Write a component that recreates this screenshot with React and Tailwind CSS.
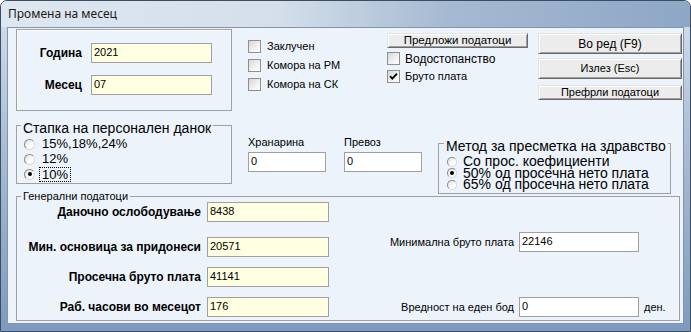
import React from "react";

// mali kontroli vo stil na Windows 7 dijalog
const CheckBox = ({ checked }) => (
    <span className="w-[13px] h-[13px] shrink-0 border border-[#8e8f8f] bg-[linear-gradient(135deg,#d6d6d6_0%,#f2f2f2_60%,#ffffff_100%)] flex items-center justify-center">
        {checked && (
            <svg width="11" height="11" viewBox="0 0 11 11">
                <path d="M2 5.2 L4.3 7.6 L9 2.6" stroke="#000" strokeWidth="1.9" fill="none" />
            </svg>
        )}
    </span>
);

const Radio = ({ checked, size = "w-[11px] h-[11px]" }) => (
    <span className={`${size} shrink-0 rounded-full border border-[#8a8a8a] border-r-[#d8d8d8] border-b-[#d8d8d8] bg-[linear-gradient(135deg,#e2e2e2_0%,#ffffff_70%)] flex items-center justify-center`}>
        {checked && <span className="w-[4px] h-[4px] rounded-full bg-black" />}
    </span>
);

const Field = ({ value, className, yellow = true }) => (
    <input
        readOnly
        defaultValue={value}
        className={`${className} block shrink-0 h-[20px] border border-[#a0a0a0] ${yellow ? "bg-[#ffffe1]" : "bg-white"} px-[2px] pt-[1px] pb-[4px] text-[11px] leading-[12px] text-black outline-none`}
    />
);

const WinButton = ({ children, className }) => (
    <button
        type="button"
        className={`${className} border border-t-[#e3e3e3] border-l-[#e3e3e3] border-r-[#696969] border-b-[#696969] bg-[#ececec] shadow-[inset_1px_1px_0_#fff,inset_-1px_-1px_0_#a0a0a0] leading-none text-black flex items-center justify-center`}
    >
        {children}
    </button>
);

export default function App() {
    return (
        <div className="w-[691px] h-[332px] flex flex-col overflow-hidden rounded-t-[7px] border border-[#3d4d61] bg-[linear-gradient(180deg,#d4dfeb_0%,#a8bcd4_45%,#7d9abf_100%)] font-['Liberation_Sans',Arial,sans-serif] text-black">
            {/* naslovna lenta */}
            <div className="h-[26px] shrink-0 flex items-center pl-[7px] bg-[linear-gradient(90deg,#dee7f0_0%,#d4dfea_40%,#a5b9d2_65%,#8ea7c6_100%)] font-['Noto_Sans',sans-serif] text-[12px] text-[#1b1b1b]">
                Промена на месец
            </div>

            <div className="flex-1 flex px-[6px] pb-[7px]">
                <div className="flex-1 flex flex-col border border-[#8495ab] bg-[#edf3fb] pl-[8px]">
                    {/* goren red */}
                    <div className="flex mt-[1px]">
                        <div className="w-[216px] h-[82px] flex flex-col pt-[13px] border border-[#a0a0a0] shadow-[inset_1px_1px_0_#fff]">
                            <div className="flex items-center">
                                <span className="w-[65px] text-right text-[12px] font-bold">Година</span>
                                <Field value="2021" className="ml-[9px] w-[121px]" />
                            </div>
                            <div className="flex items-center mt-[12px]">
                                <span className="w-[65px] text-right text-[12px] font-bold">Месец</span>
                                <Field value="07" className="ml-[9px] w-[121px]" />
                            </div>
                        </div>

                        <div className="ml-[16px] w-[139px] pt-[11px] flex flex-col gap-[6px] text-[11px]">
                            <label className="h-[13px] flex items-center gap-[6px]"><CheckBox />Заклучен</label>
                            <label className="h-[13px] flex items-center gap-[6px]"><CheckBox />Комора на РМ</label>
                            <label className="h-[13px] flex items-center gap-[6px]"><CheckBox />Комора на СК</label>
                        </div>

                        <div className="w-[151px] pt-[4px] flex flex-col">
                            <WinButton className="w-[141px] h-[15px] text-[11.5px]">Предложи податоци</WinButton>
                            <label className="mt-[4px] h-[13px] flex items-center gap-[5px] text-[12px]"><CheckBox />Водостопанство</label>
                            <label className="mt-[5px] h-[13px] flex items-center gap-[5px] text-[11px]"><CheckBox checked />Бруто плата</label>
                        </div>

                        <div className="w-[144px] pt-[4px] flex flex-col">
                            <WinButton className="w-[144px] h-[21px] text-[12px]">Во ред (F9)</WinButton>
                            <WinButton className="w-[144px] h-[21px] mt-[4px] text-[11px]">Излез (Esc)</WinButton>
                            <WinButton className="w-[144px] h-[15px] mt-[6px] text-[11px]">Префрли податоци</WinButton>
                        </div>
                    </div>

                    {/* sreden red */}
                    <div className="flex items-start mt-[7px]">
                        <fieldset className="w-[216px] border border-[#a0a0a0] pb-[2px]">
                            <legend className="ml-[4px] px-[2px] text-[14px] leading-[14px] whitespace-nowrap">
                                <span className="inline-block translate-y-[3px]">Стапка на персонален данок</span>
                            </legend>
                            <div className="flex flex-col pt-[5px] pl-[7px] gap-[1px] text-[13px]">
                                <div className="h-[14px] flex items-center gap-[7px]"><Radio />15%,18%,24%</div>
                                <div className="h-[14px] flex items-center gap-[7px]"><Radio />12%</div>
                                <div className="h-[14px] flex items-center gap-[4px]">
                                    <Radio checked />
                                    <span className="border border-dotted border-black px-[2px] leading-[13px]">10%</span>
                                </div>
                            </div>
                        </fieldset>

                        <div className="ml-[16px] w-[78px] pt-[18px] flex flex-col">
                            <span className="text-[11px] leading-[13px]">Хранарина</span>
                            <Field value="0" className="mt-[3px] w-[78px]" yellow={false} />
                        </div>
                        <div className="ml-[18px] w-[78px] pt-[18px] flex flex-col">
                            <span className="text-[11px] leading-[13px]">Превоз</span>
                            <Field value="0" className="mt-[3px] w-[78px]" yellow={false} />
                        </div>

                        <fieldset className="ml-[16px] mt-[18px] w-[233px] border border-[#a0a0a0] pb-[2px]">
                            <legend className="ml-[5px] px-[2px] text-[14px] leading-[14px] whitespace-nowrap">
                                <span className="inline-block translate-y-[3px]">Метод за пресметка на здравство</span>
                            </legend>
                            <div className="flex flex-col pt-[6px] pl-[8px] text-[14px] leading-[11.5px] whitespace-nowrap">
                                <div className="h-[11.5px] flex items-center gap-[6px]"><Radio size="w-[10px] h-[10px]" />Со прос. коефициенти</div>
                                <div className="h-[11.5px] flex items-center gap-[6px]"><Radio size="w-[10px] h-[10px]" checked />50% од просечна нето плата</div>
                                <div className="h-[11.5px] flex items-center gap-[6px]"><Radio size="w-[10px] h-[10px]" />65% од просечна нето плата</div>
                            </div>
                        </fieldset>
                    </div>

                    {/* generalni podatoci */}
                    <fieldset className="mt-[-3.5px] w-[664px] border border-[#a0a0a0] pb-[3px]">
                        <legend className="ml-[4px] px-[2px] text-[11px] leading-[12px]">Генерални податоци</legend>
                        <div className="flex">
                            <div className="flex flex-col">
                                <div className="flex items-center">
                                    <span className="w-[184px] text-right text-[12px] font-bold">Даночно ослободување</span>
                                    <Field value="8438" className="ml-[6px] w-[122px]" />
                                </div>
                                <div className="flex items-center mt-[15px]">
                                    <span className="w-[184px] text-right text-[12px] font-bold">Мин. основица за придонеси</span>
                                    <Field value="20571" className="ml-[6px] w-[122px]" />
                                </div>
                                <div className="flex items-center mt-[10px]">
                                    <span className="w-[184px] text-right text-[12px] font-bold">Просечна бруто плата</span>
                                    <Field value="41141" className="ml-[6px] w-[122px]" />
                                </div>
                                <div className="flex items-center mt-[10px]">
                                    <span className="w-[184px] text-right text-[12px] font-bold">Раб. часови во месецот</span>
                                    <Field value="176" className="ml-[6px] w-[122px]" />
                                </div>
                            </div>

                            <div className="ml-[35px] pt-[30px] flex flex-col text-[11px]">
                                <div className="flex items-center">
                                    <span className="w-[150px] text-right">Минимална бруто плата</span>
                                    <Field value="22146" className="ml-[5px] w-[120px]" yellow={false} />
                                </div>
                                <div className="flex items-center mt-[45px]">
                                    <span className="w-[150px] text-right">Вредност на еден бод</span>
                                    <Field value="0" className="ml-[5px] w-[120px]" yellow={false} />
                                    <span className="ml-[5px]">ден.</span>
                                </div>
                            </div>
                        </div>
                    </fieldset>
                </div>
            </div>
        </div>
    );
}
